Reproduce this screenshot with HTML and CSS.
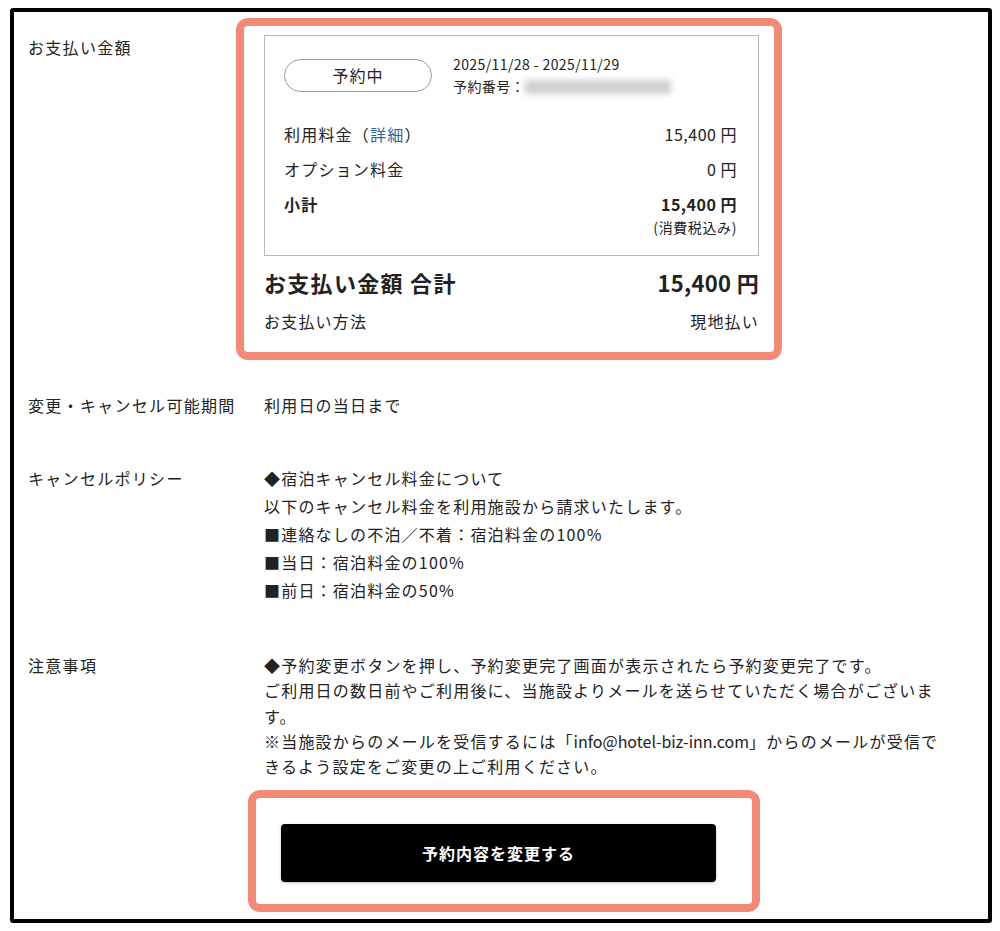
FILE: index.html
```html
<!DOCTYPE html>
<html lang="ja">
<head>
    <meta charset="UTF-8">
    <meta name="viewport" content="width=device-width, initial-scale=1.0">
    <title>予約内容の確認</title>
    <link rel="stylesheet" href="styles.css">
</head>
<body>
    <div class="frame">
        <div class="row row-payment">
            <div class="label">お支払い金額</div>
            <div class="mark mark-payment">
                <div class="card">
                    <div class="card-head">
                        <span class="status">予約中</span>
                        <div class="stay">
                            <div>2025/11/28 - 2025/11/29</div>
                            <div>予約番号：<span class="masked"></span></div>
                        </div>
                    </div>
                    <div class="line first">
                        <span>利用料金（<a href="#" class="detail">詳細</a>）</span>
                        <span class="amount">15,400 円</span>
                    </div>
                    <div class="line">
                        <span>オプション料金</span>
                        <span class="amount">0 円</span>
                    </div>
                    <div class="line subtotal">
                        <span>小計</span>
                        <span class="amount">15,400 円</span>
                    </div>
                    <div class="tax-note">(消費税込み)</div>
                </div>
                <div class="total">
                    <span class="total-label">お支払い金額 合計</span>
                    <span>15,400 円</span>
                </div>
                <div class="method">
                    <span>お支払い方法</span>
                    <span>現地払い</span>
                </div>
            </div>
        </div>

        <div class="row row-period">
            <div class="label">変更・キャンセル可能期間</div>
            <div class="value">利用日の当日まで</div>
        </div>

        <div class="row row-policy">
            <div class="label">キャンセルポリシー</div>
            <div class="value">
                ◆宿泊キャンセル料金について<br>
                以下のキャンセル料金を利用施設から請求いたします。<br>
                ■連絡なしの不泊／不着：宿泊料金の100%<br>
                ■当日：宿泊料金の100%<br>
                ■前日：宿泊料金の50%
            </div>
        </div>

        <div class="row row-notes">
            <div class="label">注意事項</div>
            <div class="value">
                ◆予約変更ボタンを押し、予約変更完了画面が表示されたら予約変更完了です。<br>
                ご利用日の数日前やご利用後に、当施設よりメールを送らせていただく場合がございま<br>す。<br>
                ※当施設からのメールを受信するには「<span class="mail">info@hotel-biz-inn.com</span>」からのメールが受信で<br>きるよう設定をご変更の上ご利用ください。
            </div>
        </div>

        <div class="mark mark-button">
            <button type="button" class="change-btn">予約内容を変更する</button>
        </div>
    </div>
</body>
</html>
```

FILE: styles.css
```css
body {
    margin: 0;
    background-color: #fff;
    font-family: "Noto Sans CJK JP", "Noto Sans", sans-serif;
    color: #222;
}

.frame {
    box-sizing: border-box;
    width: 982px;
    height: 915px;
    margin: 8px 0 0 10px;
    border: 4px solid #000;
    border-radius: 3px;
}

.row {
    display: flex;
    align-items: flex-start;
}

.label {
    box-sizing: border-box;
    width: 222px;
    flex-shrink: 0;
    padding-left: 14px;
    font-size: 16px;
    line-height: 22px;
    letter-spacing: 1.3px;
}

.value {
    padding-left: 28px;
    font-size: 16px;
    line-height: 22px;
    letter-spacing: 1.2px;
    white-space: nowrap;
}

.mail {
    letter-spacing: 0;
}

.mark {
    box-sizing: border-box;
    border: 8px solid #f38a78;
    border-radius: 12px;
}

/* payment block */
.row-payment {
    padding-top: 6px;
}

.row-payment .label {
    padding-top: 18px;
}

.mark-payment {
    width: 546px;
    padding: 9px 15px 20px 20px;
}

.card {
    border: 1px solid #b8b8b8;
    padding: 17px 21px 19px 19px;
}

.card-head {
    display: flex;
    align-items: center;
}

.status {
    box-sizing: border-box;
    width: 148px;
    height: 33px;
    border: 1px solid #9a9a9a;
    border-radius: 17px;
    text-align: center;
    font-size: 16px;
    line-height: 31px;
    letter-spacing: 1px;
}

.stay {
    margin-left: 21px;
    font-size: 14px;
    line-height: 22px;
    letter-spacing: 0.4px;
}

.masked {
    display: inline-block;
    width: 146px;
    height: 14px;
    vertical-align: -2px;
    background-color: #cfcfcf;
    filter: blur(3px);
}

.line {
    display: flex;
    justify-content: space-between;
    margin-top: 11px;
    font-size: 16px;
    line-height: 24px;
    letter-spacing: 1.2px;
}

.line .amount {
    letter-spacing: 0.5px;
}

.line.first {
    margin-top: 25px;
}

.detail {
    color: #2c669b;
    text-decoration: none;
}

.subtotal {
    font-weight: bold;
}

.tax-note {
    margin-top: 2px;
    text-align: right;
    font-size: 14px;
    line-height: 18px;
    letter-spacing: 0.6px;
}

.total {
    display: flex;
    justify-content: space-between;
    margin-top: 11px;
    font-size: 22px;
    font-weight: bold;
    line-height: 30px;
    letter-spacing: 0.3px;
}

.total-label {
    letter-spacing: 1.3px;
}

.method {
    display: flex;
    justify-content: space-between;
    margin-top: 13px;
    font-size: 16px;
    line-height: 22px;
    letter-spacing: 1.2px;
}

/* other rows */
.row-period {
    margin-top: 34px;
}

.row-policy {
    margin-top: 48px;
}

.row-policy .label,
.row-policy .value {
    line-height: 28px;
}

.row-notes {
    margin-top: 49px;
}

.row-notes .label,
.row-notes .value {
    line-height: 25.3px;
}

/* button */
.mark-button {
    width: 512px;
    margin: 11px 0 0 234px;
    padding: 26px 0 22px 25px;
}

.change-btn {
    display: block;
    width: 435px;
    height: 58px;
    border: none;
    border-radius: 4px;
    background-color: #000;
    color: #fff;
    font-family: "Noto Sans CJK JP", sans-serif;
    font-size: 16px;
    font-weight: bold;
    letter-spacing: 1px;
    box-shadow: 0 1px 3px rgba(0, 0, 0, 0.25);
    cursor: pointer;
}
```
